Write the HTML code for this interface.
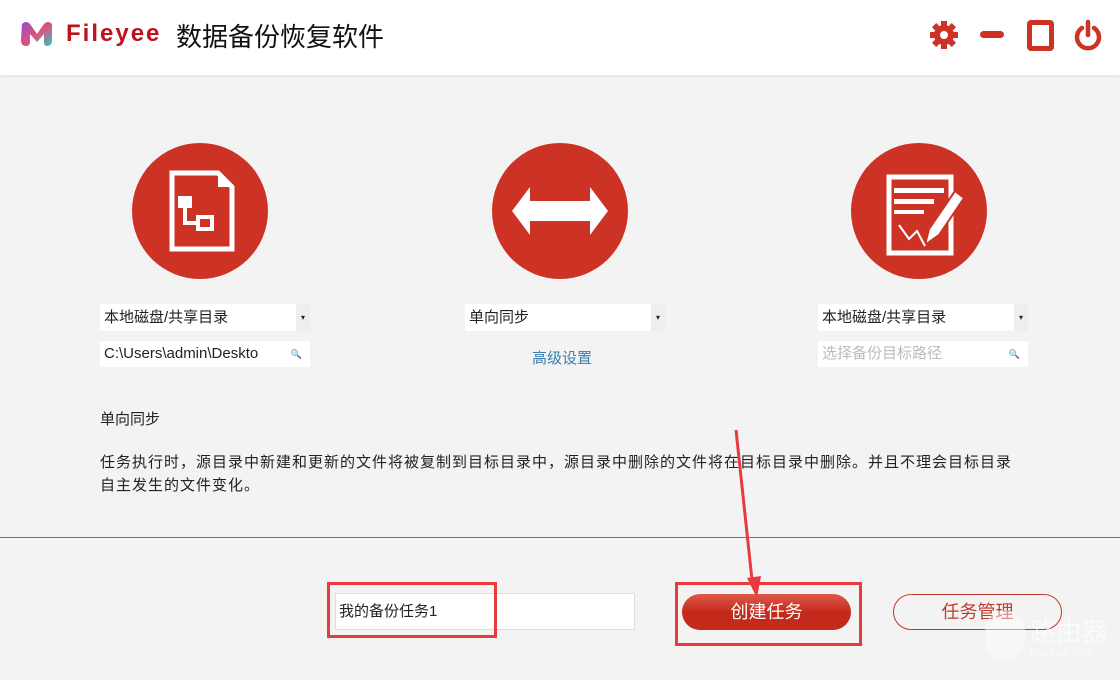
<!DOCTYPE html><html><head><meta charset="utf-8"><style>
*{margin:0;padding:0;box-sizing:border-box}
body{width:1120px;height:680px;background:#f3f3f3;font-family:"Liberation Sans","Noto Sans CJK SC",sans-serif;position:relative;overflow:hidden;color:#222}
.hdr{position:absolute;left:0;top:0;width:1120px;height:75px;background:#fff;box-shadow:0 1px 3px #ddd}
.a{position:absolute}
.circ{position:absolute;width:136px;height:136px;border-radius:50%;background:#cc3324;top:143px}
.dd{position:absolute;height:27px;background:#fff;font-size:15px;line-height:27px;padding-left:4px;top:304px}
.dd i{position:absolute;right:0;top:0;width:14px;height:27px;background:#eee;font-style:normal;font-size:8px;text-align:center;line-height:27px}
.sr{position:absolute;height:26px;background:#fff;font-size:15px;line-height:26px;padding-left:4px;top:341px}
.sr i{position:absolute;right:8px;top:0;font-style:normal;font-size:9px;color:#999}
</style></head><body>
<div class="hdr">
<svg class="a" style="left:18px;top:20px" width="38" height="30" viewBox="0 0 38 30"><defs><linearGradient id="g" x1="0" y1="0" x2="1" y2="1"><stop offset="0" stop-color="#8a4fd0"/><stop offset=".5" stop-color="#e0507a"/><stop offset="1" stop-color="#33c3c8"/></linearGradient></defs><path d="M4 4 Q8 0 12 4 L19 14 L26 4 Q30 0 34 4 L34 20 Q34 26 29 26 Q26 26 26 22 L26 14 L19 22 L12 14 L12 22 Q12 26 8 26 Q3 26 3 20Z" fill="url(#g)"/></svg>
<div class="a" style="left:66px;top:20px;font-size:24px;font-weight:bold;color:#c0121d;letter-spacing:2px">Fileyee</div>
<div class="a" style="left:176px;top:17px;font-size:26px;color:#111">数据备份恢复软件</div>
<svg class="a" style="left:928px;top:19px" width="32" height="32" viewBox="0 0 32 32"><g fill="#cc3324"><circle cx="16" cy="16" r="10"/><rect x="13" y="2" width="6" height="28"/><rect x="2" y="13" width="28" height="6"/><rect x="13" y="2" width="6" height="28" transform="rotate(45 16 16)"/><rect x="13" y="2" width="6" height="28" transform="rotate(-45 16 16)"/></g><circle cx="16" cy="16" r="4" fill="#fff"/></svg>
<div class="a" style="left:980px;top:31px;width:24px;height:7px;border-radius:4px;background:#cc3324"></div>
<div class="a" style="left:1027px;top:20px;width:27px;height:31px;border:5px solid #cc3324;border-radius:4px"></div>
<svg class="a" style="left:1073px;top:19px" width="30" height="32" viewBox="0 0 30 32"><path d="M9 9 A11 11 0 1 0 21 9" fill="none" stroke="#cc3324" stroke-width="4.5" stroke-linecap="round"/><line x1="15" y1="3" x2="15" y2="16" stroke="#cc3324" stroke-width="4.5" stroke-linecap="round"/></svg>
</div>
<div class="circ" style="left:132px"><svg width="136" height="136" viewBox="0 0 136 136"><path d="M40 30 H86 L100 44 V106 H40Z" fill="none" stroke="#fff" stroke-width="5"/><path d="M86 30 V44 H100" fill="#fff"/><rect x="46" y="53" width="14" height="12" fill="#fff"/><path d="M53 65 V80 H66" stroke="#fff" stroke-width="4" fill="none"/><rect x="66" y="74" width="14" height="12" fill="none" stroke="#fff" stroke-width="4"/></svg></div>
<div class="circ" style="left:492px"><svg width="136" height="136" viewBox="0 0 136 136"><path d="M20 68 L38 44 V58 H98 V44 L116 68 L98 92 V78 H38 V92Z" fill="#fff"/></svg></div>
<div class="circ" style="left:851px"><svg width="136" height="136" viewBox="0 0 136 136"><path d="M38 34 H100 V110 H38Z" fill="none" stroke="#fff" stroke-width="5"/><rect x="43" y="45" width="50" height="5" fill="#fff"/><rect x="43" y="56" width="40" height="5" fill="#fff"/><rect x="43" y="67" width="30" height="4" fill="#fff"/><path d="M74 102 L78 86 L104 48 L113 55 L88 92Z" fill="#fff" stroke="#cc3324" stroke-width="2"/><path d="M48 82 L58 96 L66 88 L74 103" stroke="#fff" stroke-width="2" fill="none"/></svg></div>
<div class="dd" style="left:100px;width:210px">本地磁盘/共享目录<i>▾</i></div>
<div class="sr" style="left:100px;width:210px">C:\Users\admin\Deskto<i>🔍</i></div>
<div class="dd" style="left:465px;width:200px">单向同步<i>▾</i></div>
<div class="a" style="left:532px;top:347px;font-size:15px;color:#3a7fb0">高级设置</div>
<div class="dd" style="left:818px;width:210px">本地磁盘/共享目录<i>▾</i></div>
<div class="sr" style="left:818px;width:210px;color:#bbb">选择备份目标路径<i>🔍</i></div>
<div class="a" style="left:100px;top:408px;font-size:15px">单向同步</div>
<div class="a" style="left:100px;top:451px;width:1000px;font-size:15px;letter-spacing:1px;line-height:23px;white-space:nowrap">任务执行时，源目录中新建和更新的文件将被复制到目标目录中，源目录中删除的文件将在目标目录中删除。并且不理会目标目录<br>自主发生的文件变化。</div>
<div class="a" style="left:0;top:537px;width:1120px;height:1px;background:#d9493c"></div>
<div class="a" style="left:335px;top:593px;width:300px;height:37px;background:#fff;border:1px solid #ddd;font-size:15px;line-height:35px;padding-left:3px">我的备份任务1</div>
<div class="a" style="left:682px;top:594px;width:169px;height:36px;border-radius:18px;background:linear-gradient(#e05a4a,#c42a1c 50%,#c42a1c);color:#fff;font-size:18px;line-height:36px;text-align:center">创建任务</div>
<div class="a" style="left:893px;top:594px;width:169px;height:36px;border-radius:18px;border:1px solid #c0392b;color:#c0392b;font-size:18px;line-height:34px;text-align:center">任务管理</div>
<div class="a" style="left:327px;top:582px;width:170px;height:56px;border:3px solid #e83a3f"></div>
<div class="a" style="left:675px;top:582px;width:187px;height:64px;border:3px solid #e83a3f"></div>
<svg class="a" style="left:0;top:0" width="1120" height="680"><path d="M736 430 L752 580" stroke="#e83a3f" stroke-width="3"/><path d="M747 578 L757 598 L761 576Z" fill="#e83a3f"/></svg>
<div class="a" style="left:985px;top:610px;width:40px;height:50px;border-radius:20px;background:rgba(255,255,255,.45)"></div>
<div class="a" style="left:1030px;top:612px;font-size:26px;color:rgba(255,255,255,.6)">路由器</div>
<div class="a" style="left:1030px;top:646px;font-size:12px;color:rgba(255,255,255,.6)">luyouqi.com</div>
</body></html>
